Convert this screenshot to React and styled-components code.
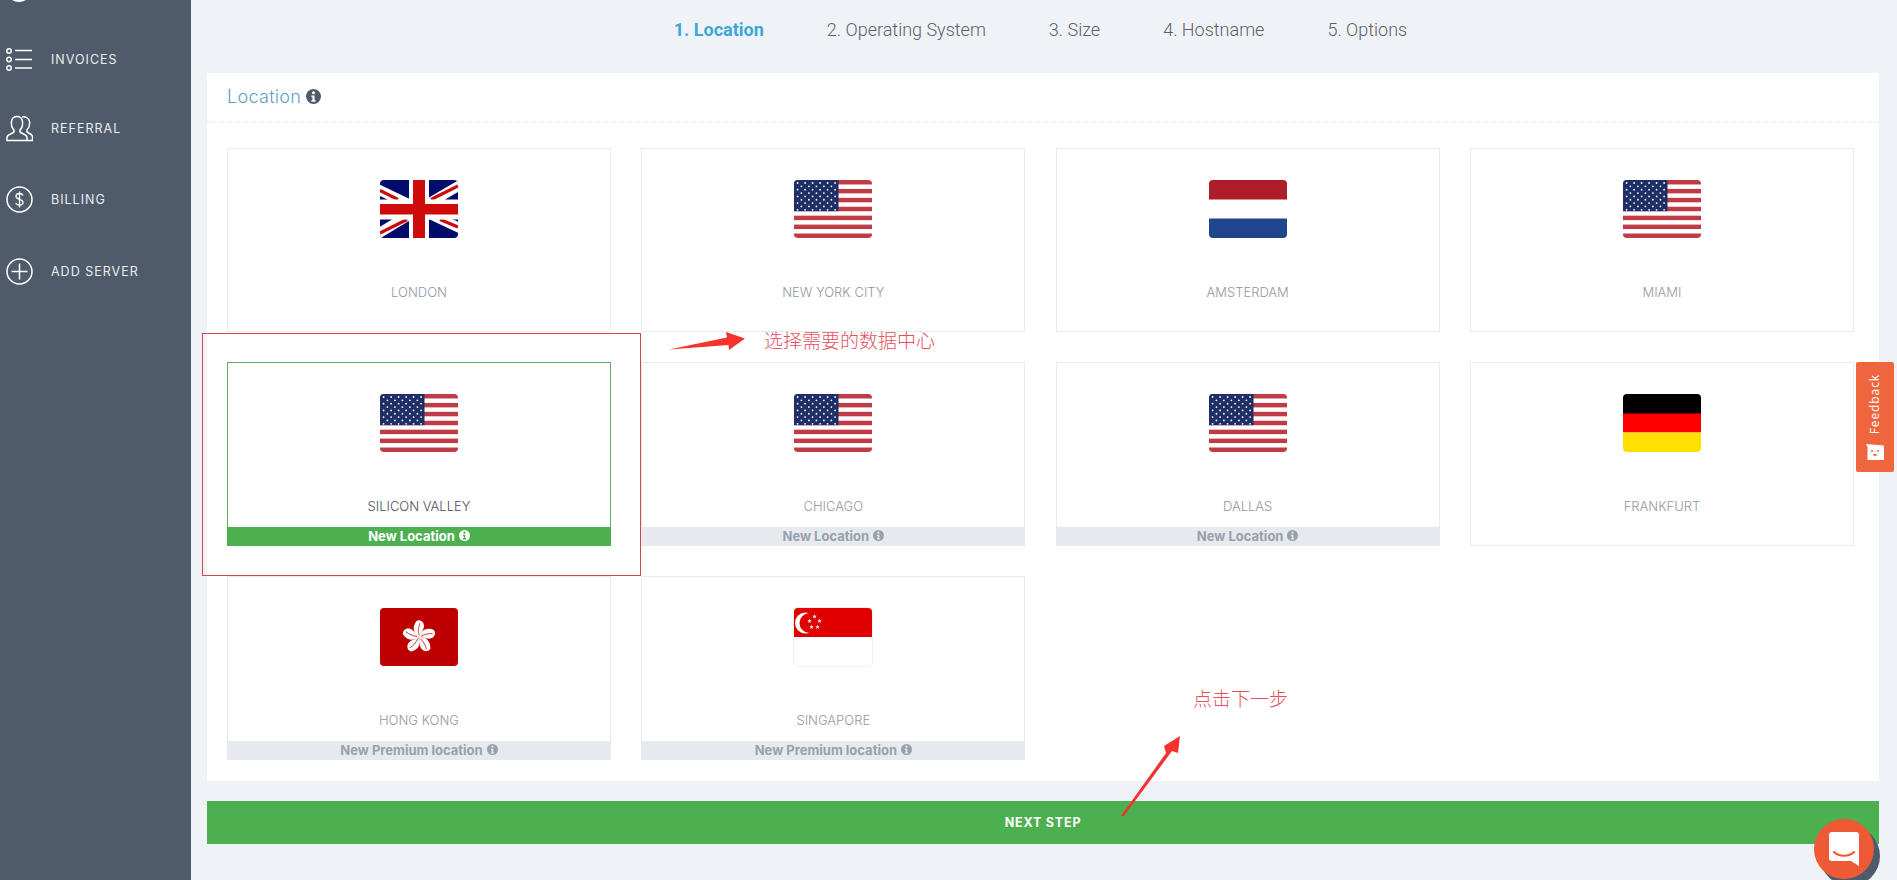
import React from "react";
import styled, { createGlobalStyle } from "styled-components";

const Global = createGlobalStyle`
  html, body { margin: 0; padding: 0; height: 880px; overflow: hidden; background: #eff3f7; }
  * { box-sizing: border-box; }
`;
const SANS = `Inter, "Open Sans", "Liberation Sans", sans-serif`;

const Page = styled.div`
  position: relative; display: flex; width: 1897px; height: 880px; overflow: hidden;
  background: #eff3f7; font-family: ${SANS};
`;
const Sidebar = styled.nav`
  flex: 0 0 191px; background: #4f5b6a; display: flex; flex-direction: column; padding-left: 6px;
`;
const SideItem = styled.div`
  display: flex; align-items: center; height: ${p => p.$h}px; flex: none; gap: 18px;
  color: #e9edf0; font-size: 12.500px; letter-spacing: 1px; font-weight: 400;
`;
const SideIcon = styled.svg`
  width: 27px; height: 27px; flex: none; fill: none; stroke: #fff; stroke-width: 1.500;
`;
const TopStub = styled.div`
  width: 26px; height: 26px; flex: none; margin: -24px 0 22px 0; border: 2px solid #fff; border-radius: 50%;
`;
const Main = styled.main`
  flex: 1; min-width: 0; display: flex; flex-direction: column; padding: 0 18px 0 16px;
`;
const Steps = styled.div`
  height: 73px; flex: none; display: flex; justify-content: center; gap: 63px; padding: 20px 5px 0 0;
  font-family: Roboto, sans-serif; font-size: 18px; line-height: 20px; font-weight: 300; color: #5c6168;
`;
const Step = styled.span`
  ${p => p.$active && `font-weight: 700; color: #3ea6d9;`}
`;
const Panel = styled.section`
  background: #fff; height: 708px; flex: none; display: flex; flex-direction: column;
`;
const PanelHead = styled.header`
  height: 50px; flex: none; padding: 0 20px 2px; display: flex; align-items: center; gap: 5px;
  border-bottom: 2px dotted #eef1f4;
  font-size: 18px; font-weight: 300; color: #5c9fc9; letter-spacing: .3px;
`;
const InfoSvg = styled.svg`
  width: ${p => p.$s}px; height: ${p => p.$s}px; flex: none; display: block;
`;
const Grid = styled.div`
  display: grid; grid-template-columns: repeat(4, 384px); grid-auto-rows: 184px; gap: 30px 30.330px;
  padding: 25px 0 0 20px;
`;
const Card = styled.div`
  display: flex; flex-direction: column; align-items: center; padding-top: 31px;
  border: 1px solid ${p => p.$sel ? "#62a866" : "#e9ebee"};
`;
const FlagBox = styled.div`
  width: 78px; height: 58px; flex: none; border-radius: 4px; overflow: hidden; line-height: 0;
  ${p => p.$outlined && `box-shadow: 0 0 0 1px #eef0f2;`}
`;
const City = styled.div`
  margin-top: 46px; font-size: 13px; line-height: 16px; font-weight: 300;
  color: ${p => p.$sel ? "#4d5258" : "#94989e"};
`;
const Bar = styled.div`
  margin: auto -1px -1px; align-self: stretch; height: 19px; padding-bottom: 2px;
  display: flex; align-items: center; justify-content: center; gap: 4px;
  background: ${p => p.$sel ? "#4caf50" : "#e6eaee"};
  color: ${p => p.$sel ? "#fff" : "#98a1ab"};
  font-size: 13px; font-weight: 700;
`;
const NextButton = styled.button`
  flex: none; margin-top: 20px; height: 43px; border: 0; background: #4caf50; color: #fff; padding: 0;
  font: 700 12.500px ${SANS}; letter-spacing: .8px;
`;
const FeedbackTab = styled.div`
  position: absolute; left: 1856px; top: 362px; width: 38px; height: 110px; background: #ef653e; border-radius: 2px;
  display: flex; flex-direction: column; align-items: center; padding-top: 12px; gap: 10px; color: #fff;
`;
const FeedbackText = styled.span`
  writing-mode: vertical-rl; transform: rotate(180deg); font: 400 12px/16px "Open Sans", sans-serif; letter-spacing: .9px;
`;
const ChatBack = styled.div`
  position: absolute; left: 1820px; top: 826px; width: 60px; height: 60px; border-radius: 50%; background: #4f5b6a;
`;
const ChatBubble = styled.div`
  position: absolute; left: 1814px; top: 819px; width: 60px; height: 60px; border-radius: 50%; background: #ef5a36;
  display: flex; align-items: center; justify-content: center;
`;
const RedRect = styled.div`
  position: absolute; left: 202px; top: 333px; width: 439px; height: 243px; border: 1px solid #d8434a;
`;
const Note = styled.div`
  position: absolute; left: ${p => p.$x}px; top: ${p => p.$y}px; color: #e4515c;
  font: 300 19px/24px "Noto Sans CJK SC", sans-serif; white-space: nowrap;
`;
const Arrow = styled.svg`
  position: absolute; left: 0; top: 0; width: 1897px; height: 880px; pointer-events: none;
`;

const Info = ({ s = 13, bg = "#4f5b6a", fg = "#fff" }) => (
  <InfoSvg $s={s} viewBox="0 0 14 14">
    <circle cx="7" cy="7" r="7" fill={bg} />
    <circle cx="7" cy="3.400" r="1.400" fill={fg} />
    <path d="M5 6h3v4.400h1V12H5v-1.600h1V7.600H5z" fill={fg} />
  </InfoSvg>
);

const US = () => {
  const stars = [];
  for (let r = 0; r < 9; r++) {
    const n = r % 2 ? 5 : 6;
    for (let c = 0; c < n; c++) stars.push([(r % 2 ? 7.400 : 3.600) + c * 7.500, 3 + r * 3.350]);
  }
  return (
    <svg width="78" height="58" viewBox="0 0 78 58">
      <rect width="78" height="58" fill="#fff" />
      {Array.from({ length: 7 }, (_, i) => (
        <rect key={i} y={i * 8.920} width="78" height="4.460" fill="#bf3b45" />
      ))}
      <rect width="44.500" height="31.200" fill="#1d2f65" />
      {stars.map(([x, y], i) => <circle key={i} cx={x} cy={y} r=".900" fill="#fff" />)}
    </svg>
  );
};
const UK = () => (
  <svg width="78" height="58" viewBox="0 0 78 58">
    <rect width="78" height="58" fill="#010b6b" />
    <path d="M-4 8.500L39 29M82 4L39 29M-4 55L39 29M82 49L39 29" stroke="#fff" strokeWidth="10" />
    <path d="M0 10.500L18 19.500M78 6L51 19.500M0 53L27 39.500M78 47L60 39.500" stroke="#cf0a0a" strokeWidth="3.200" />
    <rect x="29" width="20" height="58" fill="#fff" />
    <rect y="19.500" width="78" height="20" fill="#fff" />
    <rect x="33" width="12" height="58" fill="#cf0a0a" />
    <rect y="24" width="78" height="10.500" fill="#cf0a0a" />
  </svg>
);
const NL = () => (
  <svg width="78" height="58" viewBox="0 0 78 58">
    <rect width="78" height="20" fill="#ad1c28" />
    <rect y="19.500" width="78" height="19" fill="#fff" />
    <rect y="38.500" width="78" height="19.500" fill="#21458c" />
  </svg>
);
const DE = () => (
  <svg width="78" height="58" viewBox="0 0 78 58">
    <rect width="78" height="20" fill="#000" />
    <rect y="19.500" width="78" height="19" fill="#fe0000" />
    <rect y="38.500" width="78" height="19.500" fill="#ffe000" />
  </svg>
);
const HK = () => (
  <svg width="78" height="58" viewBox="0 0 78 58">
    <rect width="78" height="58" fill="#bd0000" />
    {[0, 72, 144, 216, 288].map(a => (
      <g key={a} transform={`rotate(${a} 39 29)`}>
        <path d="M39 29C33 25 32 19 36.500 13C40 11 44 14 44 18C44 22 40 25 39 29Z" fill="#fff" />
        <path d="M39 27C38 22 38.500 19 40 15" stroke="#bd0000" strokeWidth=".700" fill="none" />
      </g>
    ))}
  </svg>
);
const SG = () => {
  const pts = [[20.500, 8.500], [25.500, 13], [23.500, 19], [17.500, 19], [15.500, 13]];
  return (
    <svg width="78" height="58" viewBox="0 0 78 58">
      <rect width="78" height="58" fill="#fff" />
      <rect width="78" height="29" fill="#e00000" />
      <circle cx="11.500" cy="15" r="10.500" fill="#fff" />
      <circle cx="15.500" cy="15" r="10" fill="#e00000" />
      {pts.map(([x, y], i) => (
        <path key={i} transform={`translate(${x} ${y})`} d="M0-2.300L.600-.700H2.200L.900.300L1.400 1.900L0 .900L-1.400 1.900L-.900.300L-2.200-.700H-.600Z" fill="#fff" />
      ))}
    </svg>
  );
};

const CARDS = [
  ["LONDON", UK],
  ["NEW YORK CITY", US],
  ["AMSTERDAM", NL],
  ["MIAMI", US],
  ["SILICON VALLEY", US, "New Location", true],
  ["CHICAGO", US, "New Location"],
  ["DALLAS", US, "New Location"],
  ["FRANKFURT", DE],
  ["HONG KONG", HK, "New Premium location"],
  ["SINGAPORE", SG, "New Premium location"],
];

const STEPS = ["1. Location", "2. Operating System", "3. Size", "4. Hostname", "5. Options"];

export default function App() {
  return (
    <Page>
      <Global />
      <Sidebar>
        <TopStub />
        <SideItem $h={70}>
          <SideIcon viewBox="0 0 27 27">
            <circle cx="3" cy="5" r="2.200" /><circle cx="3" cy="13.500" r="2.200" /><circle cx="3" cy="22" r="2.200" />
            <path d="M9 4.500H26M9 13.500H26M9 22H26" />
          </SideIcon>
          INVOICES
        </SideItem>
        <SideItem $h={69}>
          <SideIcon viewBox="0 0 27 27">
            <path d="M1 25.500v-3c0-2 2-3 5-4.200 2-.800 2.500-2 2-3.300-2-2-3-5-2.500-8.500C6 3 8.500 1.500 11 1.500S16 3 16.500 6.500c.500 3.500-.500 6.500-2.500 8.500-.500 1.300 0 2.500 2 3.300 3 1.200 5 2.200 5 4.200v3z" />
            <path d="M16 2c3-1 7 1 7.500 4.500.500 3.500-.500 6.500-2.500 8.500-.500 1.300 0 2.500 2 3.300 2 .800 3.500 1.800 3.500 3.700v3.500H21" />
          </SideIcon>
          REFERRAL
        </SideItem>
        <SideItem $h={72}>
          <SideIcon viewBox="0 0 27 27">
            <circle cx="13.500" cy="13.500" r="12.500" />
            <path d="M17 9.500c-.500-1.500-2-2-3.500-2-2 0-3.500 1-3.500 2.800 0 3.900 7 2.300 7 6 0 1.800-1.500 2.800-3.500 2.800-1.700 0-3.200-.700-3.700-2.200M13.500 5.500v16" strokeWidth="1.300" />
          </SideIcon>
          BILLING
        </SideItem>
        <SideItem $h={73}>
          <SideIcon viewBox="0 0 27 27">
            <circle cx="13.500" cy="13.500" r="12.500" />
            <path d="M13.500 5.500v16M5.500 13.500h16" />
          </SideIcon>
          ADD SERVER
        </SideItem>
      </Sidebar>
      <Main>
        <Steps>
          {STEPS.map((s, i) => <Step key={s} $active={i === 0}>{s}</Step>)}
        </Steps>
        <Panel>
          <PanelHead>Location <Info s={15} /></PanelHead>
          <Grid>
            {CARDS.map(([name, Flag, badge, sel]) => (
              <Card key={name} $sel={sel}>
                <FlagBox $outlined={Flag === SG}><Flag /></FlagBox>
                <City $sel={sel}>{name}</City>
                {badge && (
                  <Bar $sel={sel}>
                    {badge}
                    <Info s={11} bg={sel ? "#fff" : "#98a1ab"} fg={sel ? "#4caf50" : "#e6eaee"} />
                  </Bar>
                )}
              </Card>
            ))}
          </Grid>
        </Panel>
        <NextButton>NEXT STEP</NextButton>
      </Main>

      <FeedbackTab>
        <FeedbackText>Feedback</FeedbackText>
        <svg width="20" height="16" viewBox="0 0 20 16">
          <path d="M1 0L19 1.500V16H2.500V3z" fill="#fff" />
          <circle cx="7" cy="7" r="1" fill="#ef653e" /><circle cx="13" cy="7" r="1" fill="#ef653e" />
          <path d="M8 10h4a2 2 0 0 1-4 0z" fill="#ef653e" />
        </svg>
      </FeedbackTab>
      <ChatBack />
      <ChatBubble>
        <svg width="30" height="34" viewBox="0 0 30 34">
          <path d="M3 0H27a3 3 0 0 1 3 3V34L22 29H3a3 3 0 0 1-3-3V3a3 3 0 0 1 3-3z" fill="#fff" />
          <path d="M5 20C10 25 20 25 25 20" stroke="#ef5a36" strokeWidth="2.200" fill="none" strokeLinecap="round" />
        </svg>
      </ChatBubble>

      <RedRect />
      <Note $x={764} $y={328}>选择需要的数据中心</Note>
      <Note $x={1193} $y={686}>点击下一步</Note>
      <Arrow viewBox="0 0 1897 880">
        <path d="M669 349.500L727 337.500L726 332L745 338.500L729 350L728.500 345Z" fill="#f5322e" />
        <path d="M1121 816L1166 753L1164 746L1180 736L1178 753L1172 751L1124 816Z" fill="#f5322e" />
      </Arrow>
    </Page>
  );
}
